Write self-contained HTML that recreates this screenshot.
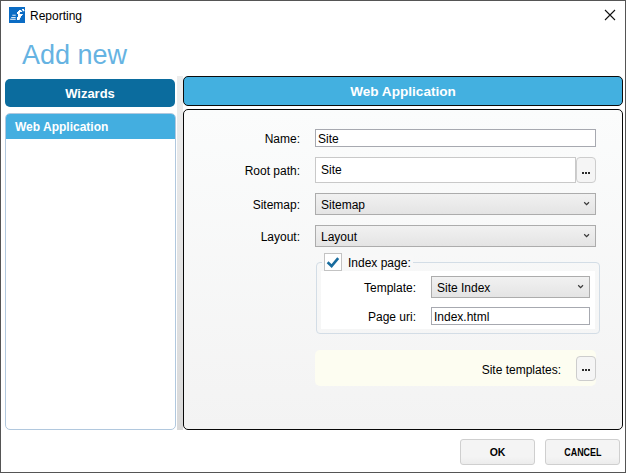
<!DOCTYPE html>
<html><head><meta charset="utf-8">
<style>
*{box-sizing:border-box;margin:0;padding:0}
html,body{width:626px;height:473px;overflow:hidden;background:#fff;font-family:"Liberation Sans",sans-serif;color:#000}
.win{position:absolute;left:0;top:0;width:626px;height:473px;border:1px solid #555;background:#fff}
.abs{position:absolute}
.t{position:absolute;white-space:nowrap;line-height:1}
.title{left:30px;top:10px;font-size:12px}
.addnew{left:22px;top:42px;font-size:27px;color:#66b3e2}
.wiz{left:5px;top:79px;width:170px;height:28px;background:#0b6c9e;border-radius:5px;color:#fff;font-weight:bold;font-size:13px;text-align:center;line-height:29px}
.list{left:5px;top:113px;width:171px;height:317px;border:1px solid #b1c8de;border-radius:5px;background:#fff;overflow:hidden}
.sel{position:absolute;left:0;top:0;width:100%;height:25px;background:#43aee0;color:#fff;font-weight:bold;font-size:12px;line-height:27px;padding-left:9px}
.split{left:177px;top:76px;width:6px;height:354px;background:linear-gradient(#ededed,#d9d9d9)}
.hdr{left:183px;top:76px;width:440px;height:30px;background:#43b0e0;border:1px solid #0c0c0c;border-radius:5px;color:#fff;font-weight:bold;font-size:13.6px;text-align:center;line-height:29px}
.content{left:183px;top:109px;width:440px;height:321px;border:1px solid #080808;border-radius:5px;background:linear-gradient(#fbfcfc,#f3f3f3)}
.lbl{font-size:12px;text-align:right}
.box{position:absolute}
.inp{position:absolute;background:#fff;border:1px solid #a7a9b0}
.inp2{position:absolute;background:#fff;border:1px solid #c9c9c9}
.cmb{position:absolute;background:linear-gradient(#f1f1f1,#e4e4e4);border:1px solid #acacac}
.btnd{position:absolute;background:#f5f5f5;border:1px solid #cdcdcd;border-radius:4px}
.dots{position:absolute;width:2px;height:2px;background:#2b2b2b}
.btn{position:absolute;background:linear-gradient(#f4f4f4 70%,#ececec);border:1px solid #cfcfcf;border-radius:3px;font-size:10.5px;font-weight:bold;text-align:center;line-height:24px}
</style></head><body>
<div class="win"></div>
<svg class="abs" style="left:9px;top:7px" width="16" height="16" viewBox="0 0 16 16">
<rect width="16" height="16" fill="#0b6cc4"/>
<g fill="#fff">
<rect x="3.3" y="7.7" width="3.4" height="1.1" opacity=".8"/>
<rect x="2.2" y="10" width="4.5" height="1" opacity=".85"/>
<rect x="1.2" y="11.7" width="5.5" height="1.1" opacity=".9"/>
<path d="M13 2h2v1h-2z M10 3h2.2v1h-2.2z M13.6 3h1.8v1.2h-1.8z M9 4h4v1h-4z M8 5h3v1h-3z M8 6h2.8v1h-2.8z M9 7h4.8v1h-4.8z M9 8h4v1h-4z M9 9h3v1h-3z M8 10h3.7v1h-3.7z M8 11h3v1h-3z M8 12h2.7v1h-2.7z"/>
</g>
</svg>
<div class="t title">Reporting</div>
<svg class="abs" style="left:604px;top:9px" width="12" height="12" viewBox="0 0 12 12"><path d="M1 1 L11 11 M11 1 L1 11" stroke="#111" stroke-width="1.1"/></svg>
<div class="t addnew">Add new</div>
<div class="abs wiz">Wizards</div>
<div class="abs list"><div class="sel">Web Application</div></div>
<div class="abs split"></div>
<div class="abs hdr">Web Application</div>
<div class="abs content"></div>

<div class="t lbl" style="left:200px;width:100px;top:133px">Name:</div>
<div class="inp" style="left:315px;top:129px;width:281px;height:18px"></div>
<div class="t" style="left:318px;top:133px;font-size:12px">Site</div>

<div class="t lbl" style="left:200px;width:100px;top:165px">Root path:</div>
<div class="inp2" style="left:315px;top:157px;width:261px;height:26px"></div>
<div class="t" style="left:321px;top:164px;font-size:12px">Site</div>
<div class="btnd" style="left:576px;top:157px;width:20px;height:26px"></div>
<div class="dots" style="left:582px;top:172px"></div><div class="dots" style="left:585px;top:172px"></div><div class="dots" style="left:588px;top:172px"></div>

<div class="t lbl" style="left:200px;width:100px;top:199px">Sitemap:</div>
<div class="cmb" style="left:315px;top:193px;width:281px;height:22px"></div>
<div class="t" style="left:321px;top:199px;font-size:12px">Sitemap</div>
<svg class="abs" style="left:583px;top:201px" width="8" height="6" viewBox="0 0 8 6"><path d="M1.2 1.3 L3.6 3.7 L6 1.3" stroke="#3a3a3a" stroke-width="1.25" fill="none"/></svg>

<div class="t lbl" style="left:200px;width:100px;top:231px">Layout:</div>
<div class="cmb" style="left:315px;top:225px;width:281px;height:22px"></div>
<div class="t" style="left:321px;top:231px;font-size:12px">Layout</div>
<svg class="abs" style="left:583px;top:233px" width="8" height="6" viewBox="0 0 8 6"><path d="M1.2 1.3 L3.6 3.7 L6 1.3" stroke="#3a3a3a" stroke-width="1.25" fill="none"/></svg>

<!-- group box -->
<div class="abs" style="left:316px;top:262px;width:284px;height:72px;border:1px solid #d3dde6;border-radius:4px"></div>
<div class="abs" style="left:322px;top:255px;width:91px;height:14px;background:#f8f8f8"></div>
<div class="abs" style="left:321px;top:271px;width:274px;height:58px;background:#fff"></div>
<div class="abs" style="left:324px;top:253px;width:18px;height:18px;border:1px solid #c3c3c3;background:#fff"></div>
<svg class="abs" style="left:324px;top:253px" width="18" height="18" viewBox="0 0 18 18"><path d="M3.6 9.3 L7.6 13 L14.2 5.2" stroke="#186c9e" stroke-width="2.6" fill="none"/></svg>
<div class="t" style="left:348px;top:257px;font-size:12px">Index page:</div>
<div class="t lbl" style="left:316px;width:100px;top:282px">Template:</div>
<div class="cmb" style="left:431px;top:276px;width:159px;height:22px"></div>
<div class="t" style="left:437px;top:282px;font-size:12px">Site Index</div>
<svg class="abs" style="left:577px;top:284px" width="8" height="6" viewBox="0 0 8 6"><path d="M1.2 1.3 L3.6 3.7 L6 1.3" stroke="#3a3a3a" stroke-width="1.25" fill="none"/></svg>
<div class="t lbl" style="left:316px;width:100px;top:311px">Page uri:</div>
<div class="inp" style="left:431px;top:307px;width:159px;height:18px"></div>
<div class="t" style="left:434px;top:311px;font-size:12px">Index.html</div>

<div class="abs" style="left:315px;top:350px;width:281px;height:36px;background:#fdfdf1;border-radius:5px"></div>
<div class="t lbl" style="left:400px;width:161px;top:364px">Site templates:</div>
<div class="btnd" style="left:576px;top:356px;width:20px;height:25px"></div>
<div class="dots" style="left:582px;top:369px"></div><div class="dots" style="left:585px;top:369px"></div><div class="dots" style="left:588px;top:369px"></div>

<div class="btn" style="left:460px;top:439px;width:75px;height:26px">OK</div>
<div class="btn" style="left:545px;top:439px;width:75px;height:26px"><span style="display:inline-block;transform:scaleX(0.85)">CANCEL</span></div>
</body></html>
